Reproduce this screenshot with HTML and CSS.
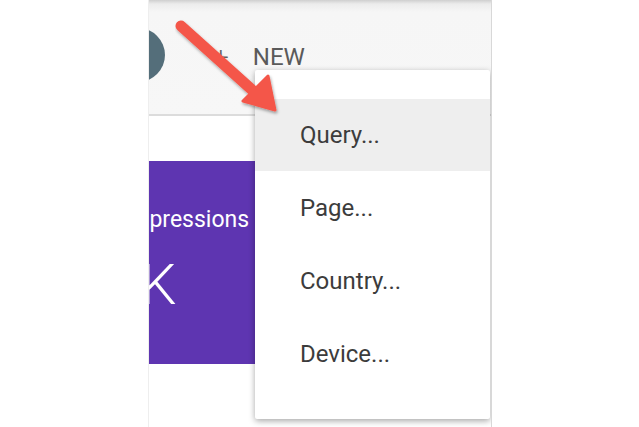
FILE: index.html
```html
<!DOCTYPE html>
<html lang="en">
<head>
    <meta charset="UTF-8">
    <title>Search Console - New filter</title>
    <link rel="stylesheet" href="styles.css">
</head>
<body>
    <div class="shot">
        <div class="header">
            <div class="avatar"></div>
            <span class="plus">+</span>
            <span class="new">NEW</span>
        </div>
        <div class="content">
            <div class="card">
                <div class="card-label">Impressions</div>
                <div class="card-value">K</div>
            </div>
        </div>

        <div class="menu">
            <div class="menu-item active">Query...</div>
            <div class="menu-item">Page...</div>
            <div class="menu-item">Country...</div>
            <div class="menu-item">Device...</div>
        </div>

        <svg class="arrow" width="120" height="120" viewBox="0 0 120 120">
            <defs>
                <filter id="shadow" x="-20%" y="-20%" width="140%" height="140%">
                    <feDropShadow dx="1" dy="2" stdDeviation="1.5" flood-color="#000" flood-opacity="0.35"/>
                </filter>
            </defs>
            <g filter="url(#shadow)" fill="#f4574a" stroke="#f4574a">
                <line x1="6" y1="8" x2="86" y2="80" stroke-width="11" stroke-linecap="round"/>
                <polygon points="100,92 68,83 93,58" stroke-width="3" stroke-linejoin="round"/>
            </g>
        </svg>
    </div>
</body>
</html>
```

FILE: styles.css
```css
body {
    margin: 0;
    background-color: #ffffff;
    font-family: Roboto, 'Noto Sans', sans-serif;
}
.shot {
    position: relative;
    width: 342px;
    height: 427px;
    margin-left: 148px;
    border-left: 1px solid #eeeeee;
    border-right: 1px solid #d8d8d8;
    overflow: hidden;
    background-color: #ffffff;
}
.header {
    display: flex;
    align-items: center;
    height: 116px;
    background: linear-gradient(to bottom, #cfcfcf 0, #ececec 4px, #f6f6f6 12px, #f7f7f7 100%);
    border-bottom: 2px solid #dcdcdc;
    box-sizing: border-box;
}
.avatar {
    flex: none;
    width: 54px;
    height: 54px;
    margin-left: -38px;
    margin-top: -4px;
    border-radius: 50%;
    background-color: #546e7a;
}
.plus {
    margin-left: 48px;
    margin-top: 0;
    font-size: 28px;
    font-weight: 300;
    color: #666666;
}
.new {
    margin-left: 24px;
    margin-top: 0;
    font-size: 24px;
    color: #5a5a5a;
}
.content {
    padding-top: 45px;
}
.card {
    width: 300px;
    height: 203px;
    background-color: #5e35b1;
    color: #ffffff;
    overflow: hidden;
}
.card-label {
    margin-top: 45px;
    margin-left: -26px;
    font-size: 23px;
}
.card-value {
    margin-top: 24px;
    margin-left: -8px;
    font-size: 56px;
    font-weight: 300;
    line-height: 1;
}
.menu {
    position: absolute;
    left: 106px;
    top: 70px;
    width: 235px;
    padding: 29px 0;
    background-color: #ffffff;
    border-radius: 2px;
    box-shadow: 0 2px 6px rgba(0, 0, 0, 0.35);
}
.menu-item {
    height: 73px;
    line-height: 75px;
    padding-left: 45px;
    font-size: 24px;
    color: #3c3c3c;
}
.menu-item.active {
    height: 72px;
    line-height: 72px;
    background-color: #eeeeee;
}
.arrow {
    position: absolute;
    left: 26px;
    top: 18px;
}
```
